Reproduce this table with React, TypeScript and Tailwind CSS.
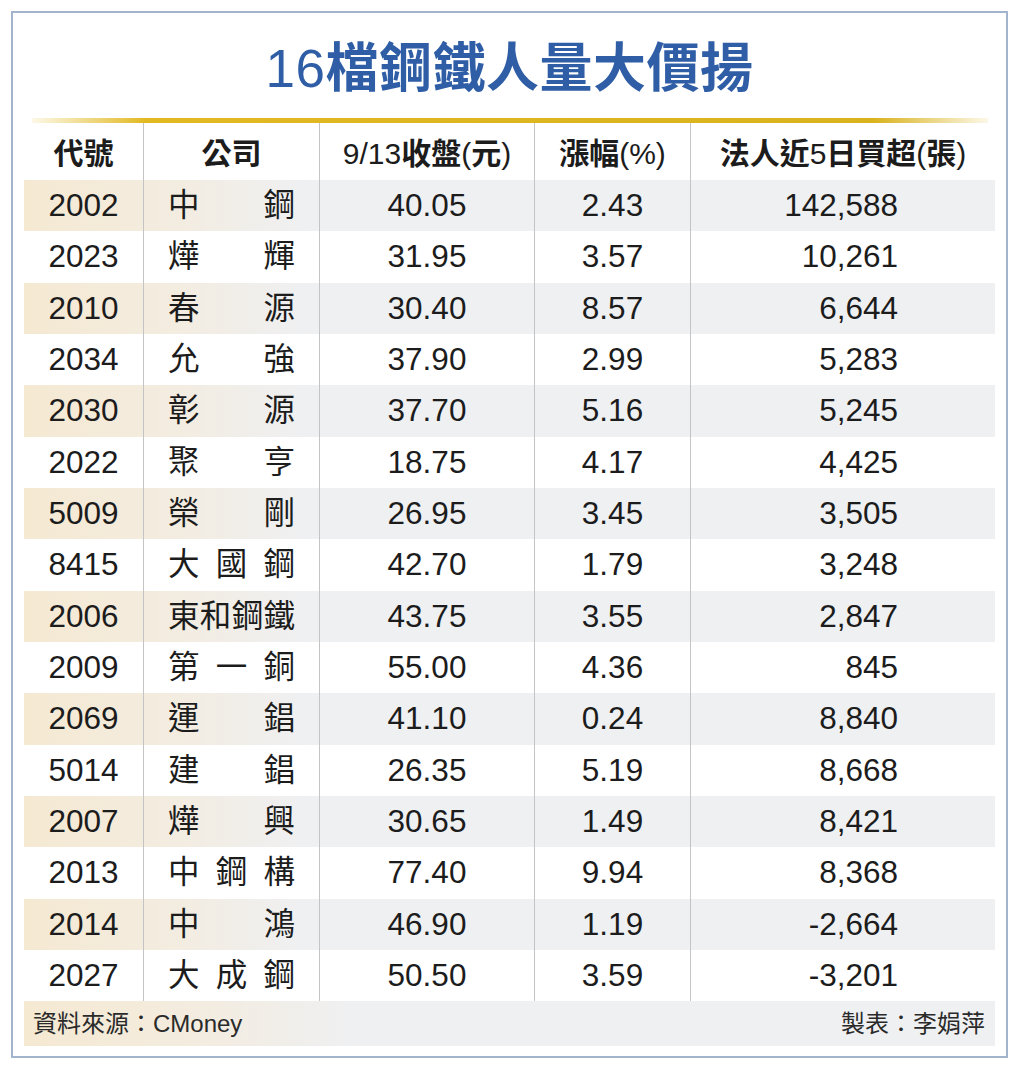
import React from "react";

const rows = [
  ["2002", "中鋼", "40.05", "2.43", "142,588"],
  ["2023", "燁輝", "31.95", "3.57", "10,261"],
  ["2010", "春源", "30.40", "8.57", "6,644"],
  ["2034", "允強", "37.90", "2.99", "5,283"],
  ["2030", "彰源", "37.70", "5.16", "5,245"],
  ["2022", "聚亨", "18.75", "4.17", "4,425"],
  ["5009", "榮剛", "26.95", "3.45", "3,505"],
  ["8415", "大國鋼", "42.70", "1.79", "3,248"],
  ["2006", "東和鋼鐵", "43.75", "3.55", "2,847"],
  ["2009", "第一銅", "55.00", "4.36", "845"],
  ["2069", "運錩", "41.10", "0.24", "8,840"],
  ["5014", "建錩", "26.35", "5.19", "8,668"],
  ["2007", "燁興", "30.65", "1.49", "8,421"],
  ["2013", "中鋼構", "77.40", "9.94", "8,368"],
  ["2014", "中鴻", "46.90", "1.19", "-2,664"],
  ["2027", "大成鋼", "50.50", "3.59", "-3,201"],
];

const font = { fontFamily: '"Liberation Sans", "Noto Sans CJK TC", sans-serif' };

const sep = "border-l border-[#c4c4c4]";
const head = "flex items-center justify-center text-[30px] pt-[4px]";

// header label: CJK parts heavier, latin parts regular
const Label = ({ parts }: { parts: [string, boolean][] }) => (
  <span>
    {parts.map(([t, cjk], i) => (
      <span key={i} className={cjk ? "font-bold" : "font-normal"}>
        {t}
      </span>
    ))}
  </span>
);

export default function App() {
  return (
    <div className="w-[1024px] h-[1068px] bg-white pt-[11px] pl-[11px]" style={font}>
      <div className="w-[997px] h-[1047px] border-2 border-[#a3b4cf] px-[11px] flex flex-col">
        {/* Title */}
        <div className="h-[105px] flex items-center justify-center">
          <h1 className="text-[53px] leading-none text-[#2f5ea6] tracking-[0.5px] mt-[6px]">
            <span className="font-medium">16</span>
            <span className="font-bold">檔鋼鐵人量大價揚</span>
          </h1>
        </div>
        <div className="ml-[8px] mr-[7px] h-[5px] bg-[linear-gradient(to_right,rgba(240,220,140,0.2),#e2b921_12%,#d9b21d_88%,rgba(240,220,140,0.2))]" />

        {/* Table head */}
        <div className="h-[57px] grid grid-cols-[119px_176px_215px_156px_305px] text-[#1c1c1c]">
          <div className={head}>
            <Label parts={[["代號", true]]} />
          </div>
          <div className={`${head} ${sep}`}>
            <Label parts={[["公司", true]]} />
          </div>
          <div className={`${head} ${sep}`}>
            <Label parts={[["9/13", false], ["收盤", true], ["(", false], ["元", true], [")", false]]} />
          </div>
          <div className={`${head} ${sep}`}>
            <Label parts={[["漲幅", true], ["(%)", false]]} />
          </div>
          <div className={`${head} ${sep}`}>
            <Label parts={[["法人近", true], ["5", false], ["日買超", true], ["(", false], ["張", true], [")", false]]} />
          </div>
        </div>

        <div className="flex flex-col">
          {rows.map((r, i) => {
            const striped = i % 2 === 0;
            return (
              <div
                key={r[0]}
                className={`h-[51.33px] grid grid-cols-[119px_176px_215px_156px_305px] text-[31.5px] text-[#1c1c1c] ${
                  striped
                    ? "bg-[linear-gradient(to_right,#f5e9d2_0px,#f3ece0_150px,#eff0f2_280px,#eff0f2_100%)]"
                    : ""
                }`}
              >
                <div className="flex items-center justify-center">{r[0]}</div>
                <div className={`flex items-center justify-between px-[24px] ${sep}`}>
                  {r[1].split("").map((c, j) => (
                    <span key={j}>{c}</span>
                  ))}
                </div>
                <div className={`flex items-center justify-center ${sep}`}>{r[2]}</div>
                <div className={`flex items-center justify-center ${sep}`}>{r[3]}</div>
                <div className={`flex items-center justify-end pr-[97px] ${sep}`}>{r[4]}</div>
              </div>
            );
          })}
        </div>

        {/* Footer */}
        <div className="h-[45px] flex items-center justify-between pl-[9px] pr-[10px] text-[24px] text-[#2a2a2a] bg-[linear-gradient(to_right,#f5e9d2_0px,#f3ece0_180px,#eff0f2_330px,#eff0f2_100%)]">
          <span>資料來源：CMoney</span>
          <span>製表：李娟萍</span>
        </div>
      </div>
    </div>
  );
}
